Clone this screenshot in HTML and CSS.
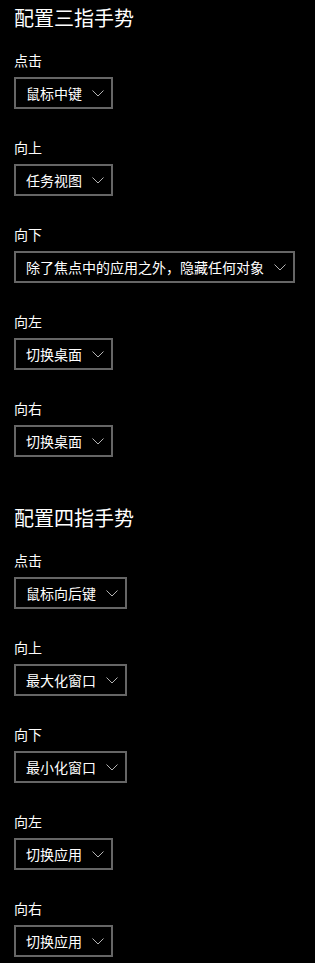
FILE: index.html
```html
<!DOCTYPE html>
<html lang="zh-CN">
<head>
<meta charset="UTF-8">
<meta name="viewport" content="width=device-width, initial-scale=1.0">
<title>触摸板</title>
<link rel="stylesheet" href="styles.css">
</head>
<body>

<div class="page">
    <div class="section">
        <h2>配置三指手势</h2>
        <div class="field">
            <div class="label">点击</div>
            <div class="select"><span>鼠标中键</span><svg class="chevron" viewBox="0 0 12 12"><polyline points="0.5,3.5 6,9 11.5,3.5"/></svg></div>
        </div>
        <div class="field">
            <div class="label">向上</div>
            <div class="select"><span>任务视图</span><svg class="chevron" viewBox="0 0 12 12"><polyline points="0.5,3.5 6,9 11.5,3.5"/></svg></div>
        </div>
        <div class="field">
            <div class="label">向下</div>
            <div class="select"><span>除了焦点中的应用之外，隐藏任何对象</span><svg class="chevron" viewBox="0 0 12 12"><polyline points="0.5,3.5 6,9 11.5,3.5"/></svg></div>
        </div>
        <div class="field">
            <div class="label">向左</div>
            <div class="select"><span>切换桌面</span><svg class="chevron" viewBox="0 0 12 12"><polyline points="0.5,3.5 6,9 11.5,3.5"/></svg></div>
        </div>
        <div class="field">
            <div class="label">向右</div>
            <div class="select"><span>切换桌面</span><svg class="chevron" viewBox="0 0 12 12"><polyline points="0.5,3.5 6,9 11.5,3.5"/></svg></div>
        </div>
    </div>

    <div class="section">
        <h2>配置四指手势</h2>
        <div class="field">
            <div class="label">点击</div>
            <div class="select"><span>鼠标向后键</span><svg class="chevron" viewBox="0 0 12 12"><polyline points="0.5,3.5 6,9 11.5,3.5"/></svg></div>
        </div>
        <div class="field">
            <div class="label">向上</div>
            <div class="select"><span>最大化窗口</span><svg class="chevron" viewBox="0 0 12 12"><polyline points="0.5,3.5 6,9 11.5,3.5"/></svg></div>
        </div>
        <div class="field">
            <div class="label">向下</div>
            <div class="select"><span>最小化窗口</span><svg class="chevron" viewBox="0 0 12 12"><polyline points="0.5,3.5 6,9 11.5,3.5"/></svg></div>
        </div>
        <div class="field">
            <div class="label">向左</div>
            <div class="select"><span>切换应用</span><svg class="chevron" viewBox="0 0 12 12"><polyline points="0.5,3.5 6,9 11.5,3.5"/></svg></div>
        </div>
        <div class="field">
            <div class="label">向右</div>
            <div class="select"><span>切换应用</span><svg class="chevron" viewBox="0 0 12 12"><polyline points="0.5,3.5 6,9 11.5,3.5"/></svg></div>
        </div>
    </div>
</div>

</body>
</html>
```

FILE: styles.css
```css
body {
    background-color: #000000;
    color: #ffffff;
    font-family: "Noto Sans CJK SC", "Noto Sans", sans-serif;
    margin: 0;
    padding: 0;
}
.page {
    padding: 4px 14px 0 14px;
}
.section + .section {
    margin-top: 47px; /* collapses with the last field's margin */
}
h2 {
    font-size: 20px;
    font-weight: normal;
    line-height: 28px;
    margin: 0 0 18px 0;
}
.field {
    margin-bottom: 28px;
}
.label {
    font-size: 14px;
    line-height: 20px;
    margin-bottom: 7px;
}
.select {
    display: inline-flex;
    align-items: center;
    box-sizing: border-box;
    height: 32px;
    border: 2px solid #666666;
    padding: 0 7px 0 10px;
    font-size: 14px;
}
.chevron {
    width: 12px;
    height: 12px;
    margin-left: 10px;
    fill: none;
    stroke: #b3b3b3;
    stroke-width: 1;
}
```
